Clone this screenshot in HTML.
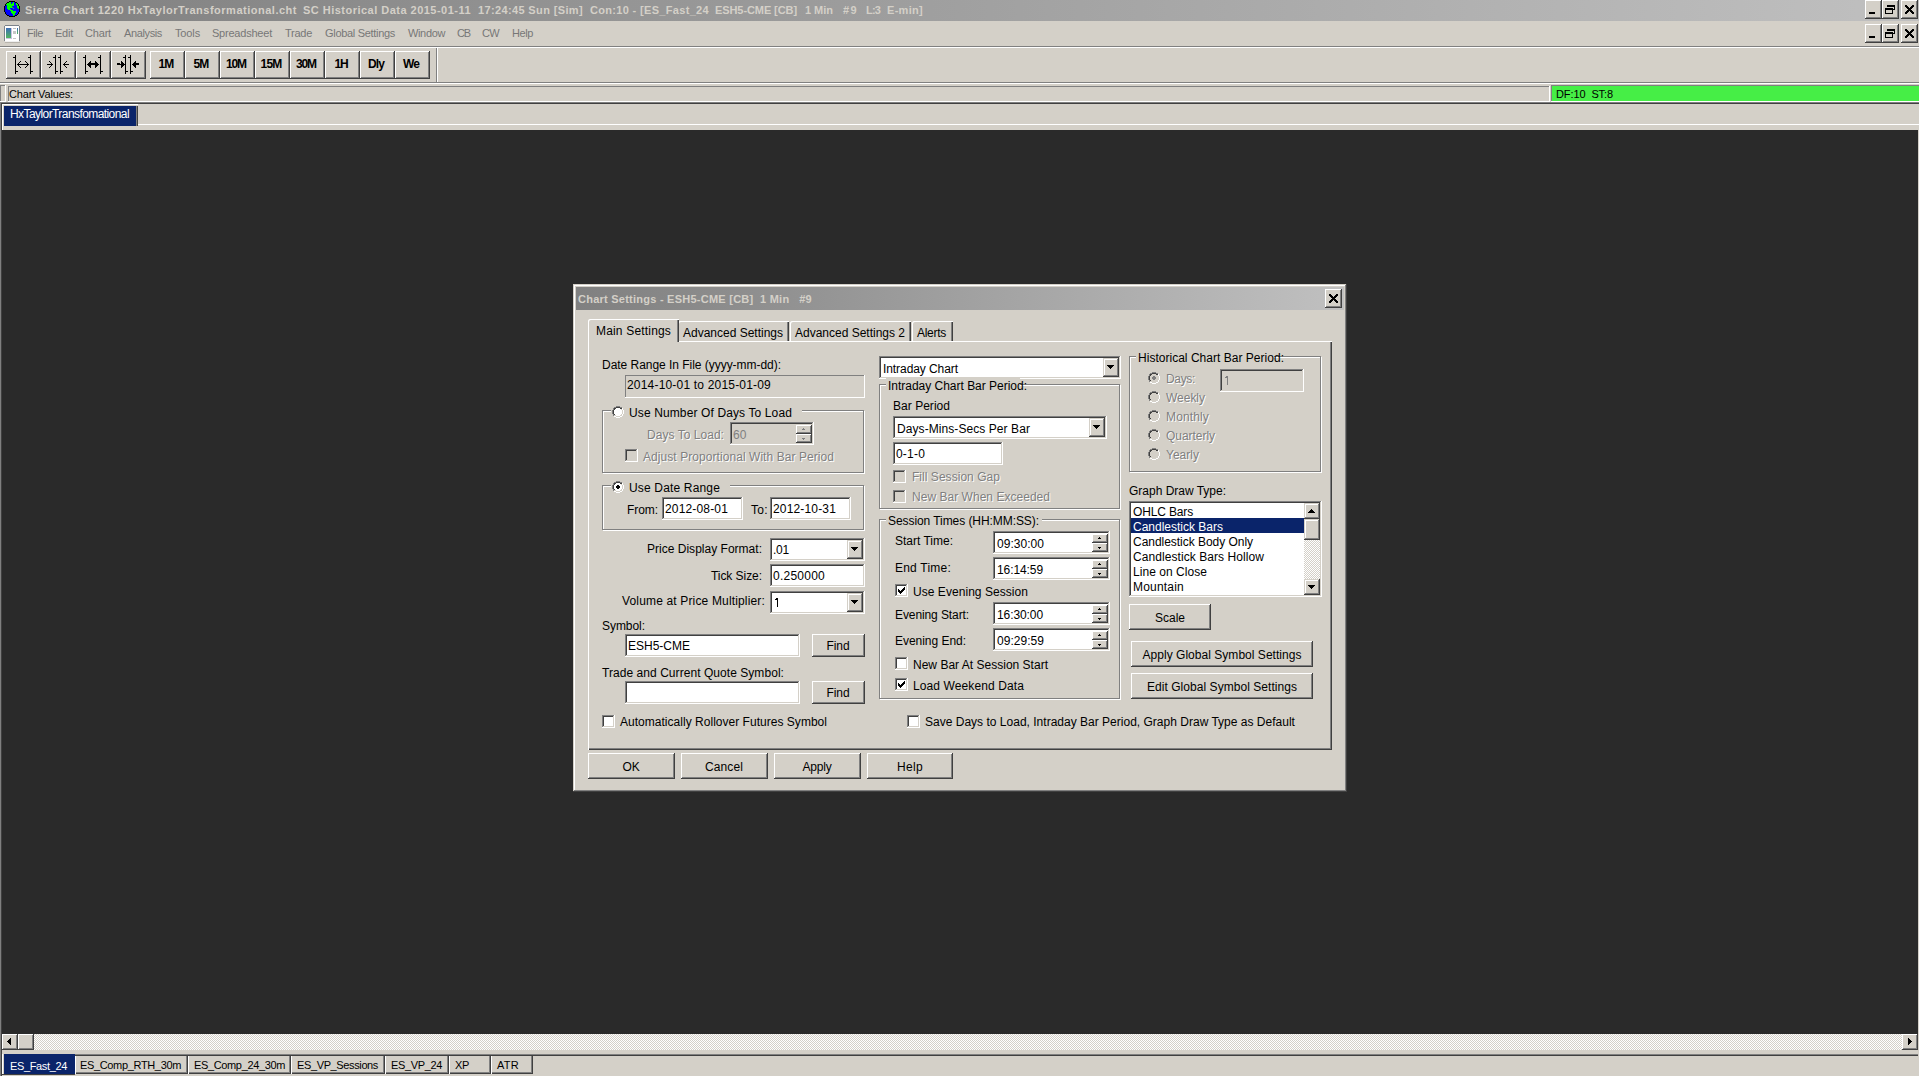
<!DOCTYPE html><html><head><meta charset="utf-8"><style>
html,body{margin:0;padding:0;}
body{width:1919px;height:1076px;overflow:hidden;position:relative;background:#d4d0c8;font-family:"Liberation Sans",sans-serif;}
body>div,body>svg,body>span{position:absolute;}
.t{position:absolute;white-space:pre;line-height:20px;font-family:"Liberation Sans",sans-serif;}
</style></head><body><div style="left:0px;top:0px;width:1919px;height:21px;background:linear-gradient(to right,#808080,#c0c0c0)"></div><svg style="left:4px;top:1px" width="16" height="16" shape-rendering="crispEdges"><rect x="5" y="0" width="1" height="1" fill="#000"/><rect x="6" y="0" width="1" height="1" fill="#000"/><rect x="7" y="0" width="1" height="1" fill="#000"/><rect x="8" y="0" width="1" height="1" fill="#000"/><rect x="9" y="0" width="1" height="1" fill="#000"/><rect x="10" y="0" width="1" height="1" fill="#000"/><rect x="3" y="1" width="1" height="1" fill="#000"/><rect x="4" y="1" width="1" height="1" fill="#000"/><rect x="5" y="1" width="1" height="1" fill="#00ff00"/><rect x="6" y="1" width="1" height="1" fill="#00ff00"/><rect x="7" y="1" width="1" height="1" fill="#0000ff"/><rect x="8" y="1" width="1" height="1" fill="#0000ff"/><rect x="9" y="1" width="1" height="1" fill="#00ff00"/><rect x="10" y="1" width="1" height="1" fill="#0000ff"/><rect x="11" y="1" width="1" height="1" fill="#000"/><rect x="12" y="1" width="1" height="1" fill="#000"/><rect x="2" y="2" width="1" height="1" fill="#000"/><rect x="3" y="2" width="1" height="1" fill="#00ff00"/><rect x="4" y="2" width="1" height="1" fill="#00ff00"/><rect x="5" y="2" width="1" height="1" fill="#00ff00"/><rect x="6" y="2" width="1" height="1" fill="#00ff00"/><rect x="7" y="2" width="1" height="1" fill="#0000ff"/><rect x="8" y="2" width="1" height="1" fill="#00ff00"/><rect x="9" y="2" width="1" height="1" fill="#00ff00"/><rect x="10" y="2" width="1" height="1" fill="#0000ff"/><rect x="11" y="2" width="1" height="1" fill="#0000ff"/><rect x="12" y="2" width="1" height="1" fill="#00ff00"/><rect x="13" y="2" width="1" height="1" fill="#000"/><rect x="1" y="3" width="1" height="1" fill="#000"/><rect x="2" y="3" width="1" height="1" fill="#00ff00"/><rect x="3" y="3" width="1" height="1" fill="#00ff00"/><rect x="4" y="3" width="1" height="1" fill="#00ff00"/><rect x="5" y="3" width="1" height="1" fill="#00ff00"/><rect x="6" y="3" width="1" height="1" fill="#00ff00"/><rect x="7" y="3" width="1" height="1" fill="#00ff00"/><rect x="8" y="3" width="1" height="1" fill="#00ff00"/><rect x="9" y="3" width="1" height="1" fill="#00ff00"/><rect x="10" y="3" width="1" height="1" fill="#0000ff"/><rect x="11" y="3" width="1" height="1" fill="#0000ff"/><rect x="12" y="3" width="1" height="1" fill="#00ff00"/><rect x="13" y="3" width="1" height="1" fill="#00ff00"/><rect x="14" y="3" width="1" height="1" fill="#000"/><rect x="1" y="4" width="1" height="1" fill="#000"/><rect x="2" y="4" width="1" height="1" fill="#0000ff"/><rect x="3" y="4" width="1" height="1" fill="#00ff00"/><rect x="4" y="4" width="1" height="1" fill="#00ff00"/><rect x="5" y="4" width="1" height="1" fill="#00ff00"/><rect x="6" y="4" width="1" height="1" fill="#00ff00"/><rect x="7" y="4" width="1" height="1" fill="#00ff00"/><rect x="8" y="4" width="1" height="1" fill="#00ff00"/><rect x="9" y="4" width="1" height="1" fill="#00ff00"/><rect x="10" y="4" width="1" height="1" fill="#0000ff"/><rect x="11" y="4" width="1" height="1" fill="#0000ff"/><rect x="12" y="4" width="1" height="1" fill="#0000ff"/><rect x="13" y="4" width="1" height="1" fill="#00ff00"/><rect x="14" y="4" width="1" height="1" fill="#000"/><rect x="0" y="5" width="1" height="1" fill="#000"/><rect x="1" y="5" width="1" height="1" fill="#0000ff"/><rect x="2" y="5" width="1" height="1" fill="#0000ff"/><rect x="3" y="5" width="1" height="1" fill="#00ff00"/><rect x="4" y="5" width="1" height="1" fill="#00ff00"/><rect x="5" y="5" width="1" height="1" fill="#00ff00"/><rect x="6" y="5" width="1" height="1" fill="#00ff00"/><rect x="7" y="5" width="1" height="1" fill="#00ff00"/><rect x="8" y="5" width="1" height="1" fill="#0000ff"/><rect x="9" y="5" width="1" height="1" fill="#0000ff"/><rect x="10" y="5" width="1" height="1" fill="#0000ff"/><rect x="11" y="5" width="1" height="1" fill="#0000ff"/><rect x="12" y="5" width="1" height="1" fill="#0000ff"/><rect x="13" y="5" width="1" height="1" fill="#00ff00"/><rect x="14" y="5" width="1" height="1" fill="#00ff00"/><rect x="15" y="5" width="1" height="1" fill="#000"/><rect x="0" y="6" width="1" height="1" fill="#000"/><rect x="1" y="6" width="1" height="1" fill="#0000ff"/><rect x="2" y="6" width="1" height="1" fill="#0000ff"/><rect x="3" y="6" width="1" height="1" fill="#00ff00"/><rect x="4" y="6" width="1" height="1" fill="#00ff00"/><rect x="5" y="6" width="1" height="1" fill="#00ff00"/><rect x="6" y="6" width="1" height="1" fill="#00ff00"/><rect x="7" y="6" width="1" height="1" fill="#00ff00"/><rect x="8" y="6" width="1" height="1" fill="#00ff00"/><rect x="9" y="6" width="1" height="1" fill="#0000ff"/><rect x="10" y="6" width="1" height="1" fill="#0000ff"/><rect x="11" y="6" width="1" height="1" fill="#0000ff"/><rect x="12" y="6" width="1" height="1" fill="#0000ff"/><rect x="13" y="6" width="1" height="1" fill="#00ff00"/><rect x="14" y="6" width="1" height="1" fill="#00ff00"/><rect x="15" y="6" width="1" height="1" fill="#000"/><rect x="0" y="7" width="1" height="1" fill="#000"/><rect x="1" y="7" width="1" height="1" fill="#0000ff"/><rect x="2" y="7" width="1" height="1" fill="#0000ff"/><rect x="3" y="7" width="1" height="1" fill="#00ff00"/><rect x="4" y="7" width="1" height="1" fill="#00ff00"/><rect x="5" y="7" width="1" height="1" fill="#00ff00"/><rect x="6" y="7" width="1" height="1" fill="#0000ff"/><rect x="7" y="7" width="1" height="1" fill="#0000ff"/><rect x="8" y="7" width="1" height="1" fill="#0000ff"/><rect x="9" y="7" width="1" height="1" fill="#00ff00"/><rect x="10" y="7" width="1" height="1" fill="#0000ff"/><rect x="11" y="7" width="1" height="1" fill="#0000ff"/><rect x="12" y="7" width="1" height="1" fill="#0000ff"/><rect x="13" y="7" width="1" height="1" fill="#0000ff"/><rect x="14" y="7" width="1" height="1" fill="#00ff00"/><rect x="15" y="7" width="1" height="1" fill="#000"/><rect x="0" y="8" width="1" height="1" fill="#000"/><rect x="1" y="8" width="1" height="1" fill="#0000ff"/><rect x="2" y="8" width="1" height="1" fill="#0000ff"/><rect x="3" y="8" width="1" height="1" fill="#0000ff"/><rect x="4" y="8" width="1" height="1" fill="#00ff00"/><rect x="5" y="8" width="1" height="1" fill="#00ff00"/><rect x="6" y="8" width="1" height="1" fill="#00ff00"/><rect x="7" y="8" width="1" height="1" fill="#0000ff"/><rect x="8" y="8" width="1" height="1" fill="#0000ff"/><rect x="9" y="8" width="1" height="1" fill="#0000ff"/><rect x="10" y="8" width="1" height="1" fill="#0000ff"/><rect x="11" y="8" width="1" height="1" fill="#0000ff"/><rect x="12" y="8" width="1" height="1" fill="#0000ff"/><rect x="13" y="8" width="1" height="1" fill="#0000ff"/><rect x="14" y="8" width="1" height="1" fill="#0000ff"/><rect x="15" y="8" width="1" height="1" fill="#000"/><rect x="0" y="9" width="1" height="1" fill="#000"/><rect x="1" y="9" width="1" height="1" fill="#0000ff"/><rect x="2" y="9" width="1" height="1" fill="#0000ff"/><rect x="3" y="9" width="1" height="1" fill="#0000ff"/><rect x="4" y="9" width="1" height="1" fill="#0000ff"/><rect x="5" y="9" width="1" height="1" fill="#0000ff"/><rect x="6" y="9" width="1" height="1" fill="#00ff00"/><rect x="7" y="9" width="1" height="1" fill="#00ff00"/><rect x="8" y="9" width="1" height="1" fill="#00ff00"/><rect x="9" y="9" width="1" height="1" fill="#0000ff"/><rect x="10" y="9" width="1" height="1" fill="#0000ff"/><rect x="11" y="9" width="1" height="1" fill="#0000ff"/><rect x="12" y="9" width="1" height="1" fill="#0000ff"/><rect x="13" y="9" width="1" height="1" fill="#0000ff"/><rect x="14" y="9" width="1" height="1" fill="#0000ff"/><rect x="15" y="9" width="1" height="1" fill="#000"/><rect x="0" y="10" width="1" height="1" fill="#000"/><rect x="1" y="10" width="1" height="1" fill="#0000ff"/><rect x="2" y="10" width="1" height="1" fill="#0000ff"/><rect x="3" y="10" width="1" height="1" fill="#0000ff"/><rect x="4" y="10" width="1" height="1" fill="#0000ff"/><rect x="5" y="10" width="1" height="1" fill="#0000ff"/><rect x="6" y="10" width="1" height="1" fill="#0000ff"/><rect x="7" y="10" width="1" height="1" fill="#00ff00"/><rect x="8" y="10" width="1" height="1" fill="#00ff00"/><rect x="9" y="10" width="1" height="1" fill="#00ff00"/><rect x="10" y="10" width="1" height="1" fill="#00ff00"/><rect x="11" y="10" width="1" height="1" fill="#00ff00"/><rect x="12" y="10" width="1" height="1" fill="#0000ff"/><rect x="13" y="10" width="1" height="1" fill="#0000ff"/><rect x="14" y="10" width="1" height="1" fill="#0000ff"/><rect x="15" y="10" width="1" height="1" fill="#000"/><rect x="1" y="11" width="1" height="1" fill="#000"/><rect x="2" y="11" width="1" height="1" fill="#0000ff"/><rect x="3" y="11" width="1" height="1" fill="#0000ff"/><rect x="4" y="11" width="1" height="1" fill="#0000ff"/><rect x="5" y="11" width="1" height="1" fill="#0000ff"/><rect x="6" y="11" width="1" height="1" fill="#0000ff"/><rect x="7" y="11" width="1" height="1" fill="#00ff00"/><rect x="8" y="11" width="1" height="1" fill="#00ff00"/><rect x="9" y="11" width="1" height="1" fill="#00ff00"/><rect x="10" y="11" width="1" height="1" fill="#00ff00"/><rect x="11" y="11" width="1" height="1" fill="#00ff00"/><rect x="12" y="11" width="1" height="1" fill="#0000ff"/><rect x="13" y="11" width="1" height="1" fill="#0000ff"/><rect x="14" y="11" width="1" height="1" fill="#000"/><rect x="1" y="12" width="1" height="1" fill="#000"/><rect x="2" y="12" width="1" height="1" fill="#0000ff"/><rect x="3" y="12" width="1" height="1" fill="#0000ff"/><rect x="4" y="12" width="1" height="1" fill="#0000ff"/><rect x="5" y="12" width="1" height="1" fill="#0000ff"/><rect x="6" y="12" width="1" height="1" fill="#0000ff"/><rect x="7" y="12" width="1" height="1" fill="#0000ff"/><rect x="8" y="12" width="1" height="1" fill="#00ff00"/><rect x="9" y="12" width="1" height="1" fill="#00ff00"/><rect x="10" y="12" width="1" height="1" fill="#00ff00"/><rect x="11" y="12" width="1" height="1" fill="#0000ff"/><rect x="12" y="12" width="1" height="1" fill="#0000ff"/><rect x="13" y="12" width="1" height="1" fill="#0000ff"/><rect x="14" y="12" width="1" height="1" fill="#000"/><rect x="2" y="13" width="1" height="1" fill="#000"/><rect x="3" y="13" width="1" height="1" fill="#0000ff"/><rect x="4" y="13" width="1" height="1" fill="#0000ff"/><rect x="5" y="13" width="1" height="1" fill="#0000ff"/><rect x="6" y="13" width="1" height="1" fill="#0000ff"/><rect x="7" y="13" width="1" height="1" fill="#0000ff"/><rect x="8" y="13" width="1" height="1" fill="#0000ff"/><rect x="9" y="13" width="1" height="1" fill="#00ff00"/><rect x="10" y="13" width="1" height="1" fill="#00ff00"/><rect x="11" y="13" width="1" height="1" fill="#0000ff"/><rect x="12" y="13" width="1" height="1" fill="#0000ff"/><rect x="13" y="13" width="1" height="1" fill="#000"/><rect x="3" y="14" width="1" height="1" fill="#000"/><rect x="4" y="14" width="1" height="1" fill="#000"/><rect x="5" y="14" width="1" height="1" fill="#0000ff"/><rect x="6" y="14" width="1" height="1" fill="#0000ff"/><rect x="7" y="14" width="1" height="1" fill="#0000ff"/><rect x="8" y="14" width="1" height="1" fill="#0000ff"/><rect x="9" y="14" width="1" height="1" fill="#00ff00"/><rect x="10" y="14" width="1" height="1" fill="#0000ff"/><rect x="11" y="14" width="1" height="1" fill="#000"/><rect x="12" y="14" width="1" height="1" fill="#000"/><rect x="5" y="15" width="1" height="1" fill="#000"/><rect x="6" y="15" width="1" height="1" fill="#000"/><rect x="7" y="15" width="1" height="1" fill="#000"/><rect x="8" y="15" width="1" height="1" fill="#000"/><rect x="9" y="15" width="1" height="1" fill="#000"/><rect x="10" y="15" width="1" height="1" fill="#000"/></svg><span class="t" style="top:0px;font-size:11px;color:#d4d0c8;font-weight:bold;left:25px;letter-spacing:0.508px;">Sierra Chart 1220 HxTaylorTransformational.cht</span><span class="t" style="top:0px;font-size:11px;color:#d4d0c8;font-weight:bold;left:303px;letter-spacing:0.480px;">SC Historical Data 2015-01-11</span><span class="t" style="top:0px;font-size:11px;color:#d4d0c8;font-weight:bold;left:478px;letter-spacing:0.365px;">17:24:45 Sun [Sim]</span><span class="t" style="top:0px;font-size:11px;color:#d4d0c8;font-weight:bold;left:590px;letter-spacing:0.326px;">Con:10 - [ES_Fast_24</span><span class="t" style="top:0px;font-size:11px;color:#d4d0c8;font-weight:bold;left:715px;letter-spacing:-0.087px;">ESH5-CME [CB]</span><span class="t" style="top:0px;font-size:11px;color:#d4d0c8;font-weight:bold;left:805px;letter-spacing:-0.025px;">1 Min</span><span class="t" style="top:0px;font-size:11px;color:#d4d0c8;font-weight:bold;left:843px;letter-spacing:1.375px;">#9</span><span class="t" style="top:0px;font-size:11px;color:#d4d0c8;font-weight:bold;left:866px;letter-spacing:-0.833px;">L:3</span><span class="t" style="top:0px;font-size:11px;color:#d4d0c8;font-weight:bold;left:887px;letter-spacing:0.294px;">E-min]</span><div style="left:1865px;top:0px;width:17px;height:19px;background:#d4d0c8;box-shadow:inset -1px -1px #404040,inset 1px 1px #ffffff,inset -2px -2px #808080,inset 2px 2px #d4d0c8;"></div><svg style="left:1865px;top:0px" width="17" height="19" shape-rendering="crispEdges" fill="#000"><rect x="4" y="12" width="6" height="2"/></svg><div style="left:1882px;top:0px;width:17px;height:19px;background:#d4d0c8;box-shadow:inset -1px -1px #404040,inset 1px 1px #ffffff,inset -2px -2px #808080,inset 2px 2px #d4d0c8;"></div><svg style="left:1882px;top:0px" width="17" height="19" shape-rendering="crispEdges" fill="#000"><rect x="3" y="10" width="1" height="4"/><rect x="3" y="8" width="8" height="2"/><rect x="3" y="13" width="8" height="1"/><rect x="10" y="10" width="1" height="4"/><rect x="12" y="7" width="1" height="3"/><rect x="5" y="5" width="8" height="2"/><rect x="11" y="9" width="1" height="1"/></svg><div style="left:1901px;top:0px;width:17px;height:19px;background:#d4d0c8;box-shadow:inset -1px -1px #404040,inset 1px 1px #ffffff,inset -2px -2px #808080,inset 2px 2px #d4d0c8;"></div><svg style="left:1901px;top:0px" width="17" height="19" shape-rendering="crispEdges" fill="#000"><rect x="7" y="11" width="1" height="1"/><rect x="6" y="12" width="1" height="1"/><rect x="11" y="7" width="1" height="1"/><rect x="9" y="10" width="1" height="1"/><rect x="10" y="6" width="1" height="1"/><rect x="11" y="13" width="1" height="1"/><rect x="5" y="6" width="1" height="1"/><rect x="5" y="12" width="1" height="1"/><rect x="7" y="7" width="1" height="1"/><rect x="6" y="8" width="1" height="1"/><rect x="5" y="13" width="1" height="1"/><rect x="4" y="5" width="1" height="1"/><rect x="12" y="6" width="1" height="1"/><rect x="12" y="12" width="1" height="1"/><rect x="9" y="11" width="1" height="1"/><rect x="6" y="6" width="1" height="1"/><rect x="4" y="6" width="1" height="1"/><rect x="9" y="8" width="1" height="1"/><rect x="11" y="11" width="1" height="1"/><rect x="11" y="12" width="1" height="1"/><rect x="9" y="9" width="1" height="1"/><rect x="8" y="10" width="1" height="1"/><rect x="10" y="11" width="1" height="1"/><rect x="11" y="6" width="1" height="1"/><rect x="5" y="5" width="1" height="1"/><rect x="5" y="11" width="1" height="1"/><rect x="10" y="12" width="1" height="1"/><rect x="10" y="10" width="1" height="1"/><rect x="7" y="10" width="1" height="1"/><rect x="12" y="5" width="1" height="1"/><rect x="10" y="7" width="1" height="1"/><rect x="4" y="13" width="1" height="1"/><rect x="5" y="7" width="1" height="1"/><rect x="8" y="9" width="1" height="1"/><rect x="6" y="11" width="1" height="1"/><rect x="10" y="8" width="1" height="1"/><rect x="4" y="12" width="1" height="1"/><rect x="12" y="13" width="1" height="1"/><rect x="9" y="7" width="1" height="1"/><rect x="8" y="8" width="1" height="1"/><rect x="6" y="10" width="1" height="1"/><rect x="11" y="5" width="1" height="1"/><rect x="7" y="8" width="1" height="1"/><rect x="6" y="7" width="1" height="1"/><rect x="7" y="9" width="1" height="1"/></svg><div style="left:1865px;top:24px;width:17px;height:19px;background:#d4d0c8;box-shadow:inset -1px -1px #404040,inset 1px 1px #ffffff,inset -2px -2px #808080,inset 2px 2px #d4d0c8;"></div><svg style="left:1865px;top:24px" width="17" height="19" shape-rendering="crispEdges" fill="#000"><rect x="4" y="12" width="6" height="2"/></svg><div style="left:1882px;top:24px;width:17px;height:19px;background:#d4d0c8;box-shadow:inset -1px -1px #404040,inset 1px 1px #ffffff,inset -2px -2px #808080,inset 2px 2px #d4d0c8;"></div><svg style="left:1882px;top:24px" width="17" height="19" shape-rendering="crispEdges" fill="#000"><rect x="3" y="10" width="1" height="4"/><rect x="3" y="8" width="8" height="2"/><rect x="3" y="13" width="8" height="1"/><rect x="10" y="10" width="1" height="4"/><rect x="12" y="7" width="1" height="3"/><rect x="5" y="5" width="8" height="2"/><rect x="11" y="9" width="1" height="1"/></svg><div style="left:1901px;top:24px;width:17px;height:19px;background:#d4d0c8;box-shadow:inset -1px -1px #404040,inset 1px 1px #ffffff,inset -2px -2px #808080,inset 2px 2px #d4d0c8;"></div><svg style="left:1901px;top:24px" width="17" height="19" shape-rendering="crispEdges" fill="#000"><rect x="7" y="11" width="1" height="1"/><rect x="6" y="12" width="1" height="1"/><rect x="11" y="7" width="1" height="1"/><rect x="9" y="10" width="1" height="1"/><rect x="10" y="6" width="1" height="1"/><rect x="11" y="13" width="1" height="1"/><rect x="5" y="6" width="1" height="1"/><rect x="5" y="12" width="1" height="1"/><rect x="7" y="7" width="1" height="1"/><rect x="6" y="8" width="1" height="1"/><rect x="5" y="13" width="1" height="1"/><rect x="4" y="5" width="1" height="1"/><rect x="12" y="6" width="1" height="1"/><rect x="12" y="12" width="1" height="1"/><rect x="9" y="11" width="1" height="1"/><rect x="6" y="6" width="1" height="1"/><rect x="4" y="6" width="1" height="1"/><rect x="9" y="8" width="1" height="1"/><rect x="11" y="11" width="1" height="1"/><rect x="11" y="12" width="1" height="1"/><rect x="9" y="9" width="1" height="1"/><rect x="8" y="10" width="1" height="1"/><rect x="10" y="11" width="1" height="1"/><rect x="11" y="6" width="1" height="1"/><rect x="5" y="5" width="1" height="1"/><rect x="5" y="11" width="1" height="1"/><rect x="10" y="12" width="1" height="1"/><rect x="10" y="10" width="1" height="1"/><rect x="7" y="10" width="1" height="1"/><rect x="12" y="5" width="1" height="1"/><rect x="10" y="7" width="1" height="1"/><rect x="4" y="13" width="1" height="1"/><rect x="5" y="7" width="1" height="1"/><rect x="8" y="9" width="1" height="1"/><rect x="6" y="11" width="1" height="1"/><rect x="10" y="8" width="1" height="1"/><rect x="4" y="12" width="1" height="1"/><rect x="12" y="13" width="1" height="1"/><rect x="9" y="7" width="1" height="1"/><rect x="8" y="8" width="1" height="1"/><rect x="6" y="10" width="1" height="1"/><rect x="11" y="5" width="1" height="1"/><rect x="7" y="8" width="1" height="1"/><rect x="6" y="7" width="1" height="1"/><rect x="7" y="9" width="1" height="1"/></svg><svg style="left:4px;top:25px" width="16" height="18" shape-rendering="crispEdges"><defs><linearGradient id="g1" x1="0" y1="0" x2="0" y2="1"><stop offset="0" stop-color="#3d6db8"/><stop offset="1" stop-color="#52b560"/></linearGradient></defs><rect x="1" y="0" width="14" height="1" fill="#7d828a"/><rect x="1" y="16" width="14" height="1" fill="#eeeeee"/><rect x="0" y="1" width="1" height="15" fill="#7d828a"/><rect x="15" y="1" width="1" height="15" fill="#7d828a"/><rect x="1" y="1" width="14" height="15" fill="#fff"/><rect x="2" y="3" width="6" height="11" fill="#c9c2e0"/><rect x="2" y="3" width="5" height="10" fill="url(#g1)"/><rect x="9" y="3" width="3" height="1" fill="#bdbdbd"/><rect x="9" y="6" width="3" height="3" fill="#c6c6c6"/><rect x="9" y="13" width="3" height="1" fill="#c6c6c6"/><rect x="13" y="3" width="1" height="6" fill="url(#g1)"/><rect x="1" y="17" width="15" height="1" fill="#b8b4ac"/></svg><span class="t" style="top:23px;font-size:11px;color:#777777;left:27px;letter-spacing:-0.434px;">File</span><span class="t" style="top:23px;font-size:11px;color:#777777;left:55px;letter-spacing:-0.242px;">Edit</span><span class="t" style="top:23px;font-size:11px;color:#777777;left:85px;letter-spacing:-0.181px;">Chart</span><span class="t" style="top:23px;font-size:11px;color:#777777;left:124px;letter-spacing:-0.371px;">Analysis</span><span class="t" style="top:23px;font-size:11px;color:#777777;left:175px;letter-spacing:-0.138px;">Tools</span><span class="t" style="top:23px;font-size:11px;color:#777777;left:212px;letter-spacing:-0.217px;">Spreadsheet</span><span class="t" style="top:23px;font-size:11px;color:#777777;left:285px;letter-spacing:-0.266px;">Trade</span><span class="t" style="top:23px;font-size:11px;color:#777777;left:325px;letter-spacing:-0.307px;">Global Settings</span><span class="t" style="top:23px;font-size:11px;color:#777777;left:408px;letter-spacing:-0.354px;">Window</span><span class="t" style="top:23px;font-size:11px;color:#777777;left:457px;letter-spacing:-1.141px;">CB</span><span class="t" style="top:23px;font-size:11px;color:#777777;left:482px;letter-spacing:-0.664px;">CW</span><span class="t" style="top:23px;font-size:11px;color:#777777;left:512px;letter-spacing:-0.406px;">Help</span><div style="left:0px;top:46px;width:1919px;height:1px;background:#808080"></div><div style="left:0px;top:47px;width:1919px;height:1px;background:#ffffff"></div><div style="left:6px;top:51px;width:35px;height:28px;background:#d4d0c8;box-shadow:inset -1px -1px #404040,inset 1px 1px #ffffff,inset -2px -2px #808080,inset 2px 2px #d4d0c8;"></div><div style="left:41px;top:51px;width:35px;height:28px;background:#d4d0c8;box-shadow:inset -1px -1px #404040,inset 1px 1px #ffffff,inset -2px -2px #808080,inset 2px 2px #d4d0c8;"></div><div style="left:76px;top:51px;width:35px;height:28px;background:#d4d0c8;box-shadow:inset -1px -1px #404040,inset 1px 1px #ffffff,inset -2px -2px #808080,inset 2px 2px #d4d0c8;"></div><div style="left:111px;top:51px;width:35px;height:28px;background:#d4d0c8;box-shadow:inset -1px -1px #404040,inset 1px 1px #ffffff,inset -2px -2px #808080,inset 2px 2px #d4d0c8;"></div><svg style="left:6px;top:51px" width="35" height="28" shape-rendering="crispEdges" fill="#000"><rect x="9" y="4" width="1" height="19"/><rect x="7" y="6" width="2" height="1"/><rect x="10" y="20" width="2" height="1"/><rect x="24" y="4" width="1" height="19"/><rect x="22" y="6" width="2" height="1"/><rect x="25" y="20" width="2" height="1"/><rect x="11" y="13" width="12" height="1"/><rect x="12" y="12" width="1" height="1"/><rect x="13" y="11" width="1" height="1"/><rect x="14" y="10" width="1" height="1"/><rect x="12" y="14" width="1" height="1"/><rect x="13" y="15" width="1" height="1"/><rect x="14" y="16" width="1" height="1"/><rect x="21" y="12" width="1" height="1"/><rect x="20" y="11" width="1" height="1"/><rect x="19" y="10" width="1" height="1"/><rect x="21" y="14" width="1" height="1"/><rect x="20" y="15" width="1" height="1"/><rect x="19" y="16" width="1" height="1"/></svg><svg style="left:41px;top:51px" width="35" height="28" shape-rendering="crispEdges" fill="#000"><rect x="14" y="4" width="1" height="19"/><rect x="12" y="6" width="2" height="1"/><rect x="15" y="20" width="2" height="1"/><rect x="19" y="4" width="1" height="19"/><rect x="17" y="6" width="2" height="1"/><rect x="20" y="20" width="2" height="1"/><rect x="6" y="13" width="6" height="1"/><rect x="11" y="13" width="1" height="1"/><rect x="10" y="12" width="1" height="1"/><rect x="9" y="11" width="1" height="1"/><rect x="8" y="10" width="1" height="1"/><rect x="10" y="14" width="1" height="1"/><rect x="9" y="15" width="1" height="1"/><rect x="8" y="16" width="1" height="1"/><rect x="22" y="13" width="6" height="1"/><rect x="22" y="13" width="1" height="1"/><rect x="23" y="12" width="1" height="1"/><rect x="24" y="11" width="1" height="1"/><rect x="25" y="10" width="1" height="1"/><rect x="23" y="14" width="1" height="1"/><rect x="24" y="15" width="1" height="1"/><rect x="25" y="16" width="1" height="1"/></svg><svg style="left:76px;top:51px" width="35" height="28" shape-rendering="crispEdges" fill="#000"><rect x="9" y="4" width="1" height="19"/><rect x="7" y="6" width="2" height="1"/><rect x="10" y="20" width="2" height="1"/><rect x="24" y="4" width="1" height="19"/><rect x="22" y="6" width="2" height="1"/><rect x="25" y="20" width="2" height="1"/><rect x="11" y="13" width="12" height="1"/><rect x="15" y="12" width="4" height="2"/><rect x="11" y="13" width="1" height="1"/><rect x="12" y="12" width="1" height="3"/><rect x="13" y="11" width="1" height="5"/><rect x="14" y="10" width="1" height="7"/><rect x="22" y="13" width="1" height="1"/><rect x="21" y="12" width="1" height="3"/><rect x="20" y="11" width="1" height="5"/><rect x="19" y="10" width="1" height="7"/></svg><svg style="left:111px;top:51px" width="35" height="28" shape-rendering="crispEdges" fill="#000"><rect x="14" y="4" width="1" height="19"/><rect x="12" y="6" width="2" height="1"/><rect x="15" y="20" width="2" height="1"/><rect x="19" y="4" width="1" height="19"/><rect x="17" y="6" width="2" height="1"/><rect x="20" y="20" width="2" height="1"/><rect x="6" y="13" width="4" height="1"/><rect x="6" y="12" width="3" height="2"/><rect x="10" y="10" width="1" height="7"/><rect x="11" y="11" width="1" height="5"/><rect x="12" y="12" width="1" height="3"/><rect x="13" y="13" width="1" height="1"/><rect x="21" y="13" width="1" height="1"/><rect x="22" y="12" width="1" height="3"/><rect x="23" y="11" width="1" height="5"/><rect x="24" y="10" width="1" height="7"/><rect x="25" y="12" width="3" height="2"/></svg><div style="left:150px;top:51px;width:35px;height:28px;background:#d4d0c8;box-shadow:inset -1px -1px #404040,inset 1px 1px #ffffff,inset -2px -2px #808080,inset 2px 2px #d4d0c8;"></div><span class="t" style="top:54px;left:-34px;width:400px;text-align:center;font-size:12px;color:#000;font-weight:bold;letter-spacing:-0.836px;">1M</span><div style="left:185px;top:51px;width:35px;height:28px;background:#d4d0c8;box-shadow:inset -1px -1px #404040,inset 1px 1px #ffffff,inset -2px -2px #808080,inset 2px 2px #d4d0c8;"></div><span class="t" style="top:54px;left:1px;width:400px;text-align:center;font-size:12px;color:#000;font-weight:bold;letter-spacing:-0.836px;">5M</span><div style="left:220px;top:51px;width:35px;height:28px;background:#d4d0c8;box-shadow:inset -1px -1px #404040,inset 1px 1px #ffffff,inset -2px -2px #808080,inset 2px 2px #d4d0c8;"></div><span class="t" style="top:54px;left:36px;width:400px;text-align:center;font-size:12px;color:#000;font-weight:bold;letter-spacing:-1.115px;">10M</span><div style="left:255px;top:51px;width:35px;height:28px;background:#d4d0c8;box-shadow:inset -1px -1px #404040,inset 1px 1px #ffffff,inset -2px -2px #808080,inset 2px 2px #d4d0c8;"></div><span class="t" style="top:54px;left:71px;width:400px;text-align:center;font-size:12px;color:#000;font-weight:bold;letter-spacing:-0.781px;">15M</span><div style="left:290px;top:51px;width:35px;height:28px;background:#d4d0c8;box-shadow:inset -1px -1px #404040,inset 1px 1px #ffffff,inset -2px -2px #808080,inset 2px 2px #d4d0c8;"></div><span class="t" style="top:54px;left:106px;width:400px;text-align:center;font-size:12px;color:#000;font-weight:bold;letter-spacing:-1.115px;">30M</span><div style="left:325px;top:51px;width:35px;height:28px;background:#d4d0c8;box-shadow:inset -1px -1px #404040,inset 1px 1px #ffffff,inset -2px -2px #808080,inset 2px 2px #d4d0c8;"></div><span class="t" style="top:54px;left:141px;width:400px;text-align:center;font-size:12px;color:#000;font-weight:bold;letter-spacing:-1.172px;">1H</span><div style="left:360px;top:51px;width:35px;height:28px;background:#d4d0c8;box-shadow:inset -1px -1px #404040,inset 1px 1px #ffffff,inset -2px -2px #808080,inset 2px 2px #d4d0c8;"></div><span class="t" style="top:54px;left:176px;width:400px;text-align:center;font-size:12px;color:#000;font-weight:bold;letter-spacing:-0.896px;">Dly</span><div style="left:395px;top:51px;width:35px;height:28px;background:#d4d0c8;box-shadow:inset -1px -1px #404040,inset 1px 1px #ffffff,inset -2px -2px #808080,inset 2px 2px #d4d0c8;"></div><span class="t" style="top:54px;left:211px;width:400px;text-align:center;font-size:12px;color:#000;font-weight:bold;letter-spacing:-0.898px;">We</span><div style="left:436px;top:48px;width:1px;height:34px;background:#808080"></div><div style="left:437px;top:48px;width:1px;height:34px;background:#ffffff"></div><div style="left:0px;top:82px;width:1919px;height:1px;background:#808080"></div><div style="left:0px;top:83px;width:1919px;height:1px;background:#ffffff"></div><div style="left:0px;top:85px;width:6px;height:17px;background:#d4d0c8;box-shadow:inset -1px -1px #ffffff,inset 1px 1px #808080"></div><div style="left:8px;top:86px;width:1542px;height:16px;background:#d4d0c8;box-shadow:inset -1px -1px #ffffff,inset 1px 1px #808080"></div><span class="t" style="top:84px;font-size:11px;color:#000;left:9px;letter-spacing:-0.141px;">Chart Values:</span><div style="left:1551px;top:85px;width:372px;height:17px;background:#46ee46;box-shadow:inset -1px -1px #ffffff,inset 1px 1px #808080"></div><span class="t" style="top:84px;font-size:11px;color:#000;left:1556px;letter-spacing:-0.098px;">DF:10  ST:8</span><div style="left:0px;top:102px;width:1919px;height:1px;background:#808080"></div><div style="left:1px;top:103px;width:1919px;height:1px;background:#404040"></div><div style="left:2px;top:104px;width:136px;height:1px;background:#ffffff"></div><div style="left:2px;top:104px;width:1px;height:26px;background:#ffffff"></div><div style="left:4px;top:106px;width:134px;height:20px;background:#0a246a;box-shadow:inset -1px 0 #404040,inset -2px 0 #808080"></div><div style="left:0px;top:102px;width:1px;height:974px;background:#808080"></div><div style="left:1px;top:103px;width:1px;height:973px;background:#404040"></div><span class="t" style="top:104px;font-size:12px;color:#fff;left:10px;letter-spacing:-0.577px;">HxTaylorTransfomational</span><div style="left:138px;top:124px;width:1781px;height:1px;background:#ffffff"></div><div style="left:0px;top:130px;width:1919px;height:904px;background:#2a2a2a;box-shadow:inset 1px 0 #808080,inset 2px 0 #404040,inset -1px 0 #d4d0c8"></div><div style="left:2px;top:1034px;width:1916px;height:16px;background:repeating-conic-gradient(#fff 0 25%,#d4d0c8 0 50%) 0 0/2px 2px"></div><div style="left:2px;top:1034px;width:16px;height:16px;background:#d4d0c8;box-shadow:inset -1px -1px #404040,inset 1px 1px #ffffff,inset -2px -2px #808080,inset 2px 2px #d4d0c8;"></div><svg style="left:7px;top:1038px" width="4" height="7" shape-rendering="crispEdges"><path d="M3 0h1v7h-1v-1h-1v-1h-1v-1h-1v-1h1v-1h1v-1h1z" fill="#000"/></svg><div style="left:18px;top:1034px;width:16px;height:16px;background:#d4d0c8;box-shadow:inset -1px -1px #404040,inset 1px 1px #ffffff,inset -2px -2px #808080,inset 2px 2px #d4d0c8;"></div><div style="left:1902px;top:1034px;width:16px;height:16px;background:#d4d0c8;box-shadow:inset -1px -1px #404040,inset 1px 1px #ffffff,inset -2px -2px #808080,inset 2px 2px #d4d0c8;"></div><svg style="left:1908px;top:1038px" width="4" height="7" shape-rendering="crispEdges"><path d="M0 0h1v1h1v1h1v1h1v1h-1v1h-1v1h-1v1h-1z" fill="#000"/></svg><div style="left:75px;top:1054px;width:1843px;height:1px;background:#808080"></div><div style="left:75px;top:1055px;width:1843px;height:1px;background:#404040"></div><div style="left:75px;top:1056px;width:113px;height:18px;background:#d4d0c8;box-shadow:inset 1px 0 #ffffff,inset -1px -1px #404040,inset -2px -2px #808080"></div><span class="t" style="top:1055px;font-size:11px;color:#000;left:80px;letter-spacing:-0.346px;">ES_Comp_RTH_30m</span><div style="left:188px;top:1056px;width:103px;height:18px;background:#d4d0c8;box-shadow:inset 1px 0 #ffffff,inset -1px -1px #404040,inset -2px -2px #808080"></div><span class="t" style="top:1055px;font-size:11px;color:#000;left:194px;letter-spacing:-0.358px;">ES_Comp_24_30m</span><div style="left:291px;top:1056px;width:94px;height:18px;background:#d4d0c8;box-shadow:inset 1px 0 #ffffff,inset -1px -1px #404040,inset -2px -2px #808080"></div><span class="t" style="top:1055px;font-size:11px;color:#000;left:297px;letter-spacing:-0.373px;">ES_VP_Sessions</span><div style="left:385px;top:1056px;width:64px;height:18px;background:#d4d0c8;box-shadow:inset 1px 0 #ffffff,inset -1px -1px #404040,inset -2px -2px #808080"></div><span class="t" style="top:1055px;font-size:11px;color:#000;left:391px;letter-spacing:-0.354px;">ES_VP_24</span><div style="left:449px;top:1056px;width:42px;height:18px;background:#d4d0c8;box-shadow:inset 1px 0 #ffffff,inset -1px -1px #404040,inset -2px -2px #808080"></div><span class="t" style="top:1055px;font-size:11px;color:#000;left:455px;letter-spacing:-0.344px;">XP</span><div style="left:491px;top:1056px;width:42px;height:18px;background:#d4d0c8;box-shadow:inset 1px 0 #ffffff,inset -1px -1px #404040,inset -2px -2px #808080"></div><span class="t" style="top:1055px;font-size:11px;color:#000;left:497px;letter-spacing:0.271px;">ATR</span><div style="left:4px;top:1054px;width:71px;height:20px;background:#0a246a"></div><span class="t" style="top:1056px;font-size:11px;color:#fff;left:10px;letter-spacing:-0.355px;">ES_Fast_24</span><div style="left:2px;top:1054px;width:1px;height:20px;background:#ffffff"></div><div style="left:2px;top:1074px;width:73px;height:1px;background:#404040"></div><div style="left:75px;top:1074px;width:1844px;height:2px;background:#d4d0c8"></div><div style="left:1918px;top:130px;width:1px;height:945px;background:#d4d0c8"></div><div style="left:573px;top:284px;width:774px;height:508px;background:#d4d0c8;box-shadow:inset -1px -1px #404040,inset 1px 1px #d4d0c8,inset -2px -2px #808080,inset 2px 2px #ffffff"></div><div style="left:576px;top:287px;width:768px;height:23px;background:linear-gradient(to right,#808080,#c0c0c0)"></div><span class="t" style="top:289px;font-size:11px;color:#d4d0c8;font-weight:bold;left:578px;letter-spacing:0.245px;">Chart Settings - ESH5-CME [CB]  1 Min   #9</span><div style="left:1325px;top:289px;width:17px;height:19px;background:#d4d0c8;box-shadow:inset -1px -1px #404040,inset 1px 1px #ffffff,inset -2px -2px #808080,inset 2px 2px #d4d0c8;"></div><svg style="left:1325px;top:289px" width="17" height="19" shape-rendering="crispEdges" fill="#000"><rect x="7" y="11" width="1" height="1"/><rect x="6" y="12" width="1" height="1"/><rect x="11" y="7" width="1" height="1"/><rect x="9" y="10" width="1" height="1"/><rect x="10" y="6" width="1" height="1"/><rect x="11" y="13" width="1" height="1"/><rect x="5" y="6" width="1" height="1"/><rect x="5" y="12" width="1" height="1"/><rect x="7" y="7" width="1" height="1"/><rect x="6" y="8" width="1" height="1"/><rect x="5" y="13" width="1" height="1"/><rect x="4" y="5" width="1" height="1"/><rect x="12" y="6" width="1" height="1"/><rect x="12" y="12" width="1" height="1"/><rect x="9" y="11" width="1" height="1"/><rect x="6" y="6" width="1" height="1"/><rect x="4" y="6" width="1" height="1"/><rect x="9" y="8" width="1" height="1"/><rect x="11" y="11" width="1" height="1"/><rect x="11" y="12" width="1" height="1"/><rect x="9" y="9" width="1" height="1"/><rect x="8" y="10" width="1" height="1"/><rect x="10" y="11" width="1" height="1"/><rect x="11" y="6" width="1" height="1"/><rect x="5" y="5" width="1" height="1"/><rect x="5" y="11" width="1" height="1"/><rect x="10" y="12" width="1" height="1"/><rect x="10" y="10" width="1" height="1"/><rect x="7" y="10" width="1" height="1"/><rect x="12" y="5" width="1" height="1"/><rect x="10" y="7" width="1" height="1"/><rect x="4" y="13" width="1" height="1"/><rect x="5" y="7" width="1" height="1"/><rect x="8" y="9" width="1" height="1"/><rect x="6" y="11" width="1" height="1"/><rect x="10" y="8" width="1" height="1"/><rect x="4" y="12" width="1" height="1"/><rect x="12" y="13" width="1" height="1"/><rect x="9" y="7" width="1" height="1"/><rect x="8" y="8" width="1" height="1"/><rect x="6" y="10" width="1" height="1"/><rect x="11" y="5" width="1" height="1"/><rect x="7" y="8" width="1" height="1"/><rect x="6" y="7" width="1" height="1"/><rect x="7" y="9" width="1" height="1"/></svg><div style="left:588px;top:341px;width:744px;height:409px;background:#d4d0c8;box-shadow:inset 1px 1px #ffffff,inset -1px -1px #404040,inset -2px -2px #808080"></div><div style="left:678px;top:321px;width:111px;height:20px;background:#d4d0c8;box-shadow:inset 1px 1px #ffffff,inset -1px 0 #404040,inset -2px 0 #808080;border-top-left-radius:2px"></div><span class="t" style="top:323px;font-size:12px;color:#000;left:683px;letter-spacing:-0.005px;">Advanced Settings</span><div style="left:790px;top:321px;width:121px;height:20px;background:#d4d0c8;box-shadow:inset 1px 1px #ffffff,inset -1px 0 #404040,inset -2px 0 #808080;border-top-left-radius:2px"></div><span class="t" style="top:323px;font-size:12px;color:#000;left:795px;letter-spacing:-0.004px;">Advanced Settings 2</span><div style="left:912px;top:321px;width:41px;height:20px;background:#d4d0c8;box-shadow:inset 1px 1px #ffffff,inset -1px 0 #404040,inset -2px 0 #808080;border-top-left-radius:2px"></div><span class="t" style="top:323px;font-size:12px;color:#000;left:917px;letter-spacing:-0.281px;">Alerts</span><div style="left:588px;top:319px;width:91px;height:23px;background:#d4d0c8;box-shadow:inset 1px 1px #ffffff,inset -1px 0 #404040,inset -2px 0 #808080;border-top-left-radius:2px"></div><span class="t" style="top:321px;font-size:12px;color:#000;left:596px;letter-spacing:0.177px;">Main Settings</span><div style="left:588px;top:753px;width:87px;height:26px;background:#d4d0c8;box-shadow:inset -1px -1px #404040,inset 1px 1px #ffffff,inset -2px -2px #808080,inset 2px 2px #d4d0c8;"></div><span class="t" style="top:757px;left:431px;width:400px;text-align:center;font-size:12px;color:#000;letter-spacing:-0.172px;">OK</span><div style="left:681px;top:753px;width:87px;height:26px;background:#d4d0c8;box-shadow:inset -1px -1px #404040,inset 1px 1px #ffffff,inset -2px -2px #808080,inset 2px 2px #d4d0c8;"></div><span class="t" style="top:757px;left:524px;width:400px;text-align:center;font-size:12px;color:#000;letter-spacing:0.107px;">Cancel</span><div style="left:774px;top:753px;width:87px;height:26px;background:#d4d0c8;box-shadow:inset -1px -1px #404040,inset 1px 1px #ffffff,inset -2px -2px #808080,inset 2px 2px #d4d0c8;"></div><span class="t" style="top:757px;left:617px;width:400px;text-align:center;font-size:12px;color:#000;letter-spacing:-0.206px;">Apply</span><div style="left:867px;top:753px;width:86px;height:26px;background:#d4d0c8;box-shadow:inset -1px -1px #404040,inset 1px 1px #ffffff,inset -2px -2px #808080,inset 2px 2px #d4d0c8;"></div><span class="t" style="top:757px;left:710px;width:400px;text-align:center;font-size:12px;color:#000;letter-spacing:0.328px;">Help</span><span class="t" style="top:355px;font-size:12px;color:#000;left:602px;letter-spacing:-0.033px;">Date Range In File (yyyy-mm-dd):</span><div style="left:625px;top:375px;width:240px;height:23px;background:#d4d0c8;box-shadow:inset -1px -1px #ffffff,inset 1px 1px #808080"></div><span class="t" style="top:375px;font-size:12px;color:#000;left:627px;letter-spacing:0.189px;">2014-10-01 to 2015-01-09</span><div style="left:602px;top:410px;width:262px;height:63px;box-sizing:border-box;border:1px solid #808080;box-shadow:inset 1px 1px #ffffff,1px 1px #ffffff"></div><div style="left:611px;top:403px;width:191px;height:14px;background:#d4d0c8"></div><svg style="left:612px;top:406px" width="12" height="12" shape-rendering="crispEdges"><path d="M4 0h4v1h-4zM2 1h2v1h-2zM8 1h2v1h-2zM1 2h1v2h-1zM0 4h1v4h-1zM1 8h1v2h-1z" fill="#808080"/><path d="M10 2h1v2h-1zM11 4h1v4h-1zM10 8h1v2h-1zM2 10h2v1h-2zM8 10h2v1h-2zM4 11h4v1h-4z" fill="#ffffff"/><path d="M4 1h4v1h-4zM2 2h2v1h-2zM8 2h2v1h-2zM2 3h1v1h-1zM1 4h1v4h-1zM2 8h1v1h-1z" fill="#404040"/><path d="M9 3h1v1h-1zM10 4h1v4h-1zM9 8h1v1h-1zM2 9h2v1h-2zM8 9h2v1h-2zM4 10h4v1h-4z" fill="#d4d0c8"/><path d="M4 2h4v1h1v1h1v4h-1v1h-1v1h-4v-1h-1v-1h-1v-4h1v-1h1z" fill="#fff"/></svg><span class="t" style="top:403px;font-size:12px;color:#000;left:629px;letter-spacing:0.121px;">Use Number Of Days To Load</span><span class="t" style="top:425px;font-size:12px;color:#fff;left:647px;margin:1px 0 0 1px;letter-spacing:0.038px;">Days To Load:</span><span class="t" style="top:425px;font-size:12px;color:#808080;left:647px;letter-spacing:0.038px;">Days To Load:</span><div style="left:730px;top:422px;width:84px;height:23px;background:#d4d0c8;box-shadow:inset -1px -1px #ffffff,inset 1px 1px #808080,inset -2px -2px #d4d0c8,inset 2px 2px #404040;"></div><div style="left:796px;top:425px;width:16px;height:9px;background:#d4d0c8;box-shadow:inset -1px -1px #404040,inset 1px 1px #ffffff,inset -2px -2px #808080,inset 2px 2px #d4d0c8;"></div><div style="left:796px;top:434px;width:16px;height:9px;background:#d4d0c8;box-shadow:inset -1px -1px #404040,inset 1px 1px #ffffff,inset -2px -2px #808080,inset 2px 2px #d4d0c8;"></div><svg style="left:802px;top:428px" width="3" height="2" shape-rendering="crispEdges" fill="#808080"><rect x="1" y="0" width="1" height="1"/><rect x="0" y="1" width="3" height="1"/></svg><svg style="left:802px;top:438px" width="3" height="2" shape-rendering="crispEdges" fill="#808080"><rect x="0" y="0" width="3" height="1"/><rect x="1" y="1" width="1" height="1"/></svg><span class="t" style="top:425px;font-size:12px;color:#808080;left:733px;">60</span><div style="left:625px;top:449px;width:13px;height:13px;background:#d4d0c8;box-shadow:inset -1px -1px #ffffff,inset 1px 1px #808080,inset -2px -2px #d4d0c8,inset 2px 2px #404040;"></div><span class="t" style="top:447px;font-size:12px;color:#fff;left:643px;margin:1px 0 0 1px;letter-spacing:0.064px;">Adjust Proportional With Bar Period</span><span class="t" style="top:447px;font-size:12px;color:#808080;left:643px;letter-spacing:0.064px;">Adjust Proportional With Bar Period</span><div style="left:602px;top:485px;width:262px;height:45px;box-sizing:border-box;border:1px solid #808080;box-shadow:inset 1px 1px #ffffff,1px 1px #ffffff"></div><div style="left:611px;top:478px;width:119px;height:14px;background:#d4d0c8"></div><svg style="left:612px;top:481px" width="12" height="12" shape-rendering="crispEdges"><path d="M4 0h4v1h-4zM2 1h2v1h-2zM8 1h2v1h-2zM1 2h1v2h-1zM0 4h1v4h-1zM1 8h1v2h-1z" fill="#808080"/><path d="M10 2h1v2h-1zM11 4h1v4h-1zM10 8h1v2h-1zM2 10h2v1h-2zM8 10h2v1h-2zM4 11h4v1h-4z" fill="#ffffff"/><path d="M4 1h4v1h-4zM2 2h2v1h-2zM8 2h2v1h-2zM2 3h1v1h-1zM1 4h1v4h-1zM2 8h1v1h-1z" fill="#404040"/><path d="M9 3h1v1h-1zM10 4h1v4h-1zM9 8h1v1h-1zM2 9h2v1h-2zM8 9h2v1h-2zM4 10h4v1h-4z" fill="#d4d0c8"/><path d="M4 2h4v1h1v1h1v4h-1v1h-1v1h-4v-1h-1v-1h-1v-4h1v-1h1z" fill="#fff"/><path d="M5 4h2v1h1v2h-1v1h-2v-1h-1v-2h1z" fill="#000"/></svg><span class="t" style="top:478px;font-size:12px;color:#000;left:629px;letter-spacing:0.163px;">Use Date Range</span><span class="t" style="top:500px;font-size:12px;color:#000;left:627px;letter-spacing:-0.069px;">From:</span><div style="left:662px;top:497px;width:81px;height:23px;background:#fff;box-shadow:inset -1px -1px #ffffff,inset 1px 1px #808080,inset -2px -2px #d4d0c8,inset 2px 2px #404040;"></div><span class="t" style="top:499px;font-size:12px;color:#000;left:665px;letter-spacing:0.161px;">2012-08-01</span><span class="t" style="top:500px;font-size:12px;color:#000;left:751px;letter-spacing:0.328px;">To:</span><div style="left:770px;top:497px;width:81px;height:23px;background:#fff;box-shadow:inset -1px -1px #ffffff,inset 1px 1px #808080,inset -2px -2px #d4d0c8,inset 2px 2px #404040;"></div><span class="t" style="top:499px;font-size:12px;color:#000;left:773px;letter-spacing:0.161px;">2012-10-31</span><span class="t" style="top:539px;font-size:12px;color:#000;right:1157px;letter-spacing:0.014px;">Price Display Format:</span><div style="left:770px;top:538px;width:95px;height:23px;background:#fff;box-shadow:inset -1px -1px #ffffff,inset 1px 1px #808080,inset -2px -2px #d4d0c8,inset 2px 2px #404040;"></div><div style="left:847px;top:540px;width:16px;height:19px;background:#d4d0c8;box-shadow:inset -1px -1px #404040,inset 1px 1px #d4d0c8,inset -2px -2px #808080,inset 2px 2px #ffffff;"></div><svg style="left:851px;top:547px" width="8" height="5" shape-rendering="crispEdges"><path d="M0 0h7v1h-1v1h-1v1h-1v1h-1v-1h-1v-1h-1v-1h-1z" fill="#000"/></svg><span class="t" style="top:540px;font-size:12px;color:#000;left:773px;letter-spacing:-0.229px;">.01</span><span class="t" style="top:566px;font-size:12px;color:#000;right:1157px;letter-spacing:-0.056px;">Tick Size:</span><div style="left:770px;top:564px;width:95px;height:23px;background:#fff;box-shadow:inset -1px -1px #ffffff,inset 1px 1px #808080,inset -2px -2px #d4d0c8,inset 2px 2px #404040;"></div><span class="t" style="top:566px;font-size:12px;color:#000;left:773px;letter-spacing:0.242px;">0.250000</span><span class="t" style="top:591px;font-size:12px;color:#000;right:1154px;letter-spacing:0.158px;">Volume at Price Multiplier:</span><div style="left:770px;top:591px;width:95px;height:23px;background:#fff;box-shadow:inset -1px -1px #ffffff,inset 1px 1px #808080,inset -2px -2px #d4d0c8,inset 2px 2px #404040;"></div><div style="left:847px;top:593px;width:16px;height:19px;background:#d4d0c8;box-shadow:inset -1px -1px #404040,inset 1px 1px #d4d0c8,inset -2px -2px #808080,inset 2px 2px #ffffff;"></div><svg style="left:851px;top:600px" width="8" height="5" shape-rendering="crispEdges"><path d="M0 0h7v1h-1v1h-1v1h-1v1h-1v-1h-1v-1h-1v-1h-1z" fill="#000"/></svg><svg style="left:775px;top:598px" width="3" height="9" shape-rendering="crispEdges" fill="#000"><rect x="2" y="0" width="1" height="9"/><rect x="1" y="0" width="1" height="2"/><rect x="0" y="1" width="1" height="1"/></svg><span class="t" style="top:616px;font-size:12px;color:#000;left:602px;letter-spacing:-0.051px;">Symbol:</span><div style="left:625px;top:634px;width:175px;height:23px;background:#fff;box-shadow:inset -1px -1px #ffffff,inset 1px 1px #808080,inset -2px -2px #d4d0c8,inset 2px 2px #404040;"></div><span class="t" style="top:636px;font-size:12px;color:#000;left:628px;letter-spacing:-0.002px;">ESH5-CME</span><div style="left:812px;top:634px;width:53px;height:23px;background:#d4d0c8;box-shadow:inset -1px -1px #404040,inset 1px 1px #ffffff,inset -2px -2px #808080,inset 2px 2px #d4d0c8;"></div><span class="t" style="top:636px;left:638px;width:400px;text-align:center;font-size:12px;color:#000;letter-spacing:-0.086px;">Find</span><span class="t" style="top:663px;font-size:12px;color:#000;left:602px;letter-spacing:0.054px;">Trade and Current Quote Symbol:</span><div style="left:625px;top:681px;width:175px;height:23px;background:#fff;box-shadow:inset -1px -1px #ffffff,inset 1px 1px #808080,inset -2px -2px #d4d0c8,inset 2px 2px #404040;"></div><div style="left:812px;top:681px;width:53px;height:23px;background:#d4d0c8;box-shadow:inset -1px -1px #404040,inset 1px 1px #ffffff,inset -2px -2px #808080,inset 2px 2px #d4d0c8;"></div><span class="t" style="top:683px;left:638px;width:400px;text-align:center;font-size:12px;color:#000;letter-spacing:-0.086px;">Find</span><div style="left:602px;top:715px;width:13px;height:13px;background:#fff;box-shadow:inset -1px -1px #ffffff,inset 1px 1px #808080,inset -2px -2px #d4d0c8,inset 2px 2px #404040;"></div><span class="t" style="top:712px;font-size:12px;color:#000;left:620px;letter-spacing:0.025px;">Automatically Rollover Futures Symbol</span><div style="left:879px;top:356px;width:242px;height:23px;background:#fff;box-shadow:inset -1px -1px #ffffff,inset 1px 1px #808080,inset -2px -2px #d4d0c8,inset 2px 2px #404040;"></div><div style="left:1103px;top:358px;width:16px;height:19px;background:#d4d0c8;box-shadow:inset -1px -1px #404040,inset 1px 1px #d4d0c8,inset -2px -2px #808080,inset 2px 2px #ffffff;"></div><svg style="left:1107px;top:365px" width="8" height="5" shape-rendering="crispEdges"><path d="M0 0h7v1h-1v1h-1v1h-1v1h-1v-1h-1v-1h-1v-1h-1z" fill="#000"/></svg><span class="t" style="top:359px;font-size:12px;color:#000;left:883px;letter-spacing:-0.075px;">Intraday Chart</span><div style="left:879px;top:384px;width:241px;height:125px;box-sizing:border-box;border:1px solid #808080;box-shadow:inset 1px 1px #ffffff,1px 1px #ffffff"></div><div style="left:886px;top:377px;width:134px;height:14px;background:#d4d0c8"></div><span class="t" style="top:376px;font-size:12px;color:#000;left:888px;letter-spacing:-0.016px;">Intraday Chart Bar Period:</span><span class="t" style="top:396px;font-size:12px;color:#000;left:893px;letter-spacing:0.030px;">Bar Period</span><div style="left:893px;top:416px;width:214px;height:23px;background:#fff;box-shadow:inset -1px -1px #ffffff,inset 1px 1px #808080,inset -2px -2px #d4d0c8,inset 2px 2px #404040;"></div><div style="left:1089px;top:418px;width:16px;height:19px;background:#d4d0c8;box-shadow:inset -1px -1px #404040,inset 1px 1px #d4d0c8,inset -2px -2px #808080,inset 2px 2px #ffffff;"></div><svg style="left:1093px;top:425px" width="8" height="5" shape-rendering="crispEdges"><path d="M0 0h7v1h-1v1h-1v1h-1v1h-1v-1h-1v-1h-1v-1h-1z" fill="#000"/></svg><span class="t" style="top:419px;font-size:12px;color:#000;left:897px;letter-spacing:0.074px;">Days-Mins-Secs Per Bar</span><div style="left:893px;top:442px;width:110px;height:23px;background:#fff;box-shadow:inset -1px -1px #ffffff,inset 1px 1px #808080,inset -2px -2px #d4d0c8,inset 2px 2px #404040;"></div><span class="t" style="top:444px;font-size:12px;color:#000;left:896px;letter-spacing:0.197px;">0-1-0</span><div style="left:893px;top:470px;width:13px;height:13px;background:#d4d0c8;box-shadow:inset -1px -1px #ffffff,inset 1px 1px #808080,inset -2px -2px #d4d0c8,inset 2px 2px #404040;"></div><span class="t" style="top:467px;font-size:12px;color:#fff;left:912px;margin:1px 0 0 1px;letter-spacing:0.039px;">Fill Session Gap</span><span class="t" style="top:467px;font-size:12px;color:#808080;left:912px;letter-spacing:0.039px;">Fill Session Gap</span><div style="left:893px;top:490px;width:13px;height:13px;background:#d4d0c8;box-shadow:inset -1px -1px #ffffff,inset 1px 1px #808080,inset -2px -2px #d4d0c8,inset 2px 2px #404040;"></div><span class="t" style="top:487px;font-size:12px;color:#fff;left:912px;margin:1px 0 0 1px;letter-spacing:0.028px;">New Bar When Exceeded</span><span class="t" style="top:487px;font-size:12px;color:#808080;left:912px;letter-spacing:0.028px;">New Bar When Exceeded</span><div style="left:879px;top:519px;width:241px;height:180px;box-sizing:border-box;border:1px solid #808080;box-shadow:inset 1px 1px #ffffff,1px 1px #ffffff"></div><div style="left:886px;top:512px;width:156px;height:14px;background:#d4d0c8"></div><span class="t" style="top:511px;font-size:12px;color:#000;left:888px;letter-spacing:-0.068px;">Session Times (HH:MM:SS):</span><span class="t" style="top:531px;font-size:12px;color:#000;left:895px;letter-spacing:-0.001px;">Start Time:</span><div style="left:993px;top:531px;width:117px;height:23px;background:#fff;box-shadow:inset -1px -1px #ffffff,inset 1px 1px #808080,inset -2px -2px #d4d0c8,inset 2px 2px #404040;"></div><div style="left:1092px;top:534px;width:16px;height:9px;background:#d4d0c8;box-shadow:inset -1px -1px #404040,inset 1px 1px #ffffff,inset -2px -2px #808080,inset 2px 2px #d4d0c8;"></div><div style="left:1092px;top:543px;width:16px;height:9px;background:#d4d0c8;box-shadow:inset -1px -1px #404040,inset 1px 1px #ffffff,inset -2px -2px #808080,inset 2px 2px #d4d0c8;"></div><svg style="left:1098px;top:537px" width="3" height="2" shape-rendering="crispEdges" fill="#000"><rect x="1" y="0" width="1" height="1"/><rect x="0" y="1" width="3" height="1"/></svg><svg style="left:1098px;top:547px" width="3" height="2" shape-rendering="crispEdges" fill="#000"><rect x="0" y="0" width="3" height="1"/><rect x="1" y="1" width="1" height="1"/></svg><span class="t" style="top:534px;font-size:12px;color:#000;left:997px;letter-spacing:0.035px;">09:30:00</span><span class="t" style="top:558px;font-size:12px;color:#000;left:895px;letter-spacing:0.219px;">End Time:</span><div style="left:993px;top:557px;width:117px;height:23px;background:#fff;box-shadow:inset -1px -1px #ffffff,inset 1px 1px #808080,inset -2px -2px #d4d0c8,inset 2px 2px #404040;"></div><div style="left:1092px;top:560px;width:16px;height:9px;background:#d4d0c8;box-shadow:inset -1px -1px #404040,inset 1px 1px #ffffff,inset -2px -2px #808080,inset 2px 2px #d4d0c8;"></div><div style="left:1092px;top:569px;width:16px;height:9px;background:#d4d0c8;box-shadow:inset -1px -1px #404040,inset 1px 1px #ffffff,inset -2px -2px #808080,inset 2px 2px #d4d0c8;"></div><svg style="left:1098px;top:563px" width="3" height="2" shape-rendering="crispEdges" fill="#000"><rect x="1" y="0" width="1" height="1"/><rect x="0" y="1" width="3" height="1"/></svg><svg style="left:1098px;top:573px" width="3" height="2" shape-rendering="crispEdges" fill="#000"><rect x="0" y="0" width="3" height="1"/><rect x="1" y="1" width="1" height="1"/></svg><span class="t" style="top:560px;font-size:12px;color:#000;left:997px;letter-spacing:-0.090px;">16:14:59</span><span class="t" style="top:605px;font-size:12px;color:#000;left:895px;letter-spacing:-0.098px;">Evening Start:</span><div style="left:993px;top:602px;width:117px;height:23px;background:#fff;box-shadow:inset -1px -1px #ffffff,inset 1px 1px #808080,inset -2px -2px #d4d0c8,inset 2px 2px #404040;"></div><div style="left:1092px;top:605px;width:16px;height:9px;background:#d4d0c8;box-shadow:inset -1px -1px #404040,inset 1px 1px #ffffff,inset -2px -2px #808080,inset 2px 2px #d4d0c8;"></div><div style="left:1092px;top:614px;width:16px;height:9px;background:#d4d0c8;box-shadow:inset -1px -1px #404040,inset 1px 1px #ffffff,inset -2px -2px #808080,inset 2px 2px #d4d0c8;"></div><svg style="left:1098px;top:608px" width="3" height="2" shape-rendering="crispEdges" fill="#000"><rect x="1" y="0" width="1" height="1"/><rect x="0" y="1" width="3" height="1"/></svg><svg style="left:1098px;top:618px" width="3" height="2" shape-rendering="crispEdges" fill="#000"><rect x="0" y="0" width="3" height="1"/><rect x="1" y="1" width="1" height="1"/></svg><span class="t" style="top:605px;font-size:12px;color:#000;left:997px;letter-spacing:-0.090px;">16:30:00</span><span class="t" style="top:631px;font-size:12px;color:#000;left:895px;letter-spacing:-0.033px;">Evening End:</span><div style="left:993px;top:628px;width:117px;height:23px;background:#fff;box-shadow:inset -1px -1px #ffffff,inset 1px 1px #808080,inset -2px -2px #d4d0c8,inset 2px 2px #404040;"></div><div style="left:1092px;top:631px;width:16px;height:9px;background:#d4d0c8;box-shadow:inset -1px -1px #404040,inset 1px 1px #ffffff,inset -2px -2px #808080,inset 2px 2px #d4d0c8;"></div><div style="left:1092px;top:640px;width:16px;height:9px;background:#d4d0c8;box-shadow:inset -1px -1px #404040,inset 1px 1px #ffffff,inset -2px -2px #808080,inset 2px 2px #d4d0c8;"></div><svg style="left:1098px;top:634px" width="3" height="2" shape-rendering="crispEdges" fill="#000"><rect x="1" y="0" width="1" height="1"/><rect x="0" y="1" width="3" height="1"/></svg><svg style="left:1098px;top:644px" width="3" height="2" shape-rendering="crispEdges" fill="#000"><rect x="0" y="0" width="3" height="1"/><rect x="1" y="1" width="1" height="1"/></svg><span class="t" style="top:631px;font-size:12px;color:#000;left:997px;letter-spacing:0.035px;">09:29:59</span><div style="left:895px;top:584px;width:13px;height:13px;background:#fff;box-shadow:inset -1px -1px #ffffff,inset 1px 1px #808080,inset -2px -2px #d4d0c8,inset 2px 2px #404040;"></div><svg style="left:898px;top:587px" width="7" height="7" shape-rendering="crispEdges"><path d="M6 0h1v3h-1v1h-1v1h-1v1h-1v1h-1v-1h-1v-1h-1v-1h-1v-3h1v1h1v1h1v1h1v-1h1v-1h1z" fill="#000"/></svg><span class="t" style="top:582px;font-size:12px;color:#000;left:913px;letter-spacing:0.049px;">Use Evening Session</span><div style="left:895px;top:657px;width:13px;height:13px;background:#fff;box-shadow:inset -1px -1px #ffffff,inset 1px 1px #808080,inset -2px -2px #d4d0c8,inset 2px 2px #404040;"></div><span class="t" style="top:655px;font-size:12px;color:#000;left:913px;letter-spacing:0.011px;">New Bar At Session Start</span><div style="left:895px;top:678px;width:13px;height:13px;background:#fff;box-shadow:inset -1px -1px #ffffff,inset 1px 1px #808080,inset -2px -2px #d4d0c8,inset 2px 2px #404040;"></div><svg style="left:898px;top:681px" width="7" height="7" shape-rendering="crispEdges"><path d="M6 0h1v3h-1v1h-1v1h-1v1h-1v1h-1v-1h-1v-1h-1v-1h-1v-3h1v1h1v1h1v1h1v-1h1v-1h1z" fill="#000"/></svg><span class="t" style="top:676px;font-size:12px;color:#000;left:913px;letter-spacing:0.106px;">Load Weekend Data</span><div style="left:907px;top:715px;width:13px;height:13px;background:#fff;box-shadow:inset -1px -1px #ffffff,inset 1px 1px #808080,inset -2px -2px #d4d0c8,inset 2px 2px #404040;"></div><span class="t" style="top:712px;font-size:12px;color:#000;left:925px;letter-spacing:0.010px;">Save Days to Load, Intraday Bar Period, Graph Draw Type as Default</span><div style="left:1129px;top:356px;width:192px;height:116px;box-sizing:border-box;border:1px solid #808080;box-shadow:inset 1px 1px #ffffff,1px 1px #ffffff"></div><div style="left:1136px;top:349px;width:138px;height:14px;background:#d4d0c8"></div><span class="t" style="top:348px;font-size:12px;color:#000;left:1138px;letter-spacing:0.022px;">Historical Chart Bar Period:</span><svg style="left:1148px;top:372px" width="12" height="12" shape-rendering="crispEdges"><path d="M4 0h4v1h-4zM2 1h2v1h-2zM8 1h2v1h-2zM1 2h1v2h-1zM0 4h1v4h-1zM1 8h1v2h-1z" fill="#808080"/><path d="M10 2h1v2h-1zM11 4h1v4h-1zM10 8h1v2h-1zM2 10h2v1h-2zM8 10h2v1h-2zM4 11h4v1h-4z" fill="#ffffff"/><path d="M4 1h4v1h-4zM2 2h2v1h-2zM8 2h2v1h-2zM2 3h1v1h-1zM1 4h1v4h-1zM2 8h1v1h-1z" fill="#404040"/><path d="M9 3h1v1h-1zM10 4h1v4h-1zM9 8h1v1h-1zM2 9h2v1h-2zM8 9h2v1h-2zM4 10h4v1h-4z" fill="#d4d0c8"/><path d="M4 2h4v1h1v1h1v4h-1v1h-1v1h-4v-1h-1v-1h-1v-4h1v-1h1z" fill="#d4d0c8"/><path d="M5 4h2v1h1v2h-1v1h-2v-1h-1v-2h1z" fill="#808080"/></svg><span class="t" style="top:369px;font-size:12px;color:#fff;left:1166px;margin:1px 0 0 1px;letter-spacing:-0.338px;">Days:</span><span class="t" style="top:369px;font-size:12px;color:#808080;left:1166px;letter-spacing:-0.338px;">Days:</span><svg style="left:1148px;top:391px" width="12" height="12" shape-rendering="crispEdges"><path d="M4 0h4v1h-4zM2 1h2v1h-2zM8 1h2v1h-2zM1 2h1v2h-1zM0 4h1v4h-1zM1 8h1v2h-1z" fill="#808080"/><path d="M10 2h1v2h-1zM11 4h1v4h-1zM10 8h1v2h-1zM2 10h2v1h-2zM8 10h2v1h-2zM4 11h4v1h-4z" fill="#ffffff"/><path d="M4 1h4v1h-4zM2 2h2v1h-2zM8 2h2v1h-2zM2 3h1v1h-1zM1 4h1v4h-1zM2 8h1v1h-1z" fill="#404040"/><path d="M9 3h1v1h-1zM10 4h1v4h-1zM9 8h1v1h-1zM2 9h2v1h-2zM8 9h2v1h-2zM4 10h4v1h-4z" fill="#d4d0c8"/><path d="M4 2h4v1h1v1h1v4h-1v1h-1v1h-4v-1h-1v-1h-1v-4h1v-1h1z" fill="#d4d0c8"/></svg><span class="t" style="top:388px;font-size:12px;color:#fff;left:1166px;margin:1px 0 0 1px;letter-spacing:-0.021px;">Weekly</span><span class="t" style="top:388px;font-size:12px;color:#808080;left:1166px;letter-spacing:-0.021px;">Weekly</span><svg style="left:1148px;top:410px" width="12" height="12" shape-rendering="crispEdges"><path d="M4 0h4v1h-4zM2 1h2v1h-2zM8 1h2v1h-2zM1 2h1v2h-1zM0 4h1v4h-1zM1 8h1v2h-1z" fill="#808080"/><path d="M10 2h1v2h-1zM11 4h1v4h-1zM10 8h1v2h-1zM2 10h2v1h-2zM8 10h2v1h-2zM4 11h4v1h-4z" fill="#ffffff"/><path d="M4 1h4v1h-4zM2 2h2v1h-2zM8 2h2v1h-2zM2 3h1v1h-1zM1 4h1v4h-1zM2 8h1v1h-1z" fill="#404040"/><path d="M9 3h1v1h-1zM10 4h1v4h-1zM9 8h1v1h-1zM2 9h2v1h-2zM8 9h2v1h-2zM4 10h4v1h-4z" fill="#d4d0c8"/><path d="M4 2h4v1h1v1h1v4h-1v1h-1v1h-4v-1h-1v-1h-1v-4h1v-1h1z" fill="#d4d0c8"/></svg><span class="t" style="top:407px;font-size:12px;color:#fff;left:1166px;margin:1px 0 0 1px;letter-spacing:0.138px;">Monthly</span><span class="t" style="top:407px;font-size:12px;color:#808080;left:1166px;letter-spacing:0.138px;">Monthly</span><svg style="left:1148px;top:429px" width="12" height="12" shape-rendering="crispEdges"><path d="M4 0h4v1h-4zM2 1h2v1h-2zM8 1h2v1h-2zM1 2h1v2h-1zM0 4h1v4h-1zM1 8h1v2h-1z" fill="#808080"/><path d="M10 2h1v2h-1zM11 4h1v4h-1zM10 8h1v2h-1zM2 10h2v1h-2zM8 10h2v1h-2zM4 11h4v1h-4z" fill="#ffffff"/><path d="M4 1h4v1h-4zM2 2h2v1h-2zM8 2h2v1h-2zM2 3h1v1h-1zM1 4h1v4h-1zM2 8h1v1h-1z" fill="#404040"/><path d="M9 3h1v1h-1zM10 4h1v4h-1zM9 8h1v1h-1zM2 9h2v1h-2zM8 9h2v1h-2zM4 10h4v1h-4z" fill="#d4d0c8"/><path d="M4 2h4v1h1v1h1v4h-1v1h-1v1h-4v-1h-1v-1h-1v-4h1v-1h1z" fill="#d4d0c8"/></svg><span class="t" style="top:426px;font-size:12px;color:#fff;left:1166px;margin:1px 0 0 1px;letter-spacing:-0.040px;">Quarterly</span><span class="t" style="top:426px;font-size:12px;color:#808080;left:1166px;letter-spacing:-0.040px;">Quarterly</span><svg style="left:1148px;top:448px" width="12" height="12" shape-rendering="crispEdges"><path d="M4 0h4v1h-4zM2 1h2v1h-2zM8 1h2v1h-2zM1 2h1v2h-1zM0 4h1v4h-1zM1 8h1v2h-1z" fill="#808080"/><path d="M10 2h1v2h-1zM11 4h1v4h-1zM10 8h1v2h-1zM2 10h2v1h-2zM8 10h2v1h-2zM4 11h4v1h-4z" fill="#ffffff"/><path d="M4 1h4v1h-4zM2 2h2v1h-2zM8 2h2v1h-2zM2 3h1v1h-1zM1 4h1v4h-1zM2 8h1v1h-1z" fill="#404040"/><path d="M9 3h1v1h-1zM10 4h1v4h-1zM9 8h1v1h-1zM2 9h2v1h-2zM8 9h2v1h-2zM4 10h4v1h-4z" fill="#d4d0c8"/><path d="M4 2h4v1h1v1h1v4h-1v1h-1v1h-4v-1h-1v-1h-1v-4h1v-1h1z" fill="#d4d0c8"/></svg><span class="t" style="top:445px;font-size:12px;color:#fff;left:1166px;margin:1px 0 0 1px;letter-spacing:0.013px;">Yearly</span><span class="t" style="top:445px;font-size:12px;color:#808080;left:1166px;letter-spacing:0.013px;">Yearly</span><div style="left:1220px;top:369px;width:84px;height:23px;background:#d4d0c8;box-shadow:inset -1px -1px #ffffff,inset 1px 1px #808080,inset -2px -2px #d4d0c8,inset 2px 2px #404040;"></div><svg style="left:1225px;top:376px" width="3" height="9" shape-rendering="crispEdges" fill="#808080"><rect x="2" y="0" width="1" height="9"/><rect x="1" y="0" width="1" height="2"/><rect x="0" y="1" width="1" height="1"/></svg><span class="t" style="top:481px;font-size:12px;color:#000;left:1129px;letter-spacing:-0.010px;">Graph Draw Type:</span><div style="left:1129px;top:501px;width:193px;height:96px;background:#fff;box-shadow:inset -1px -1px #ffffff,inset 1px 1px #808080,inset -2px -2px #d4d0c8,inset 2px 2px #404040;"></div><span class="t" style="top:502px;font-size:12px;color:#000;left:1133px;letter-spacing:-0.151px;">OHLC Bars</span><div style="left:1131px;top:518px;width:173px;height:15px;background:#0a246a"></div><span class="t" style="top:517px;font-size:12px;color:#fff;left:1133px;letter-spacing:-0.003px;">Candlestick Bars</span><span class="t" style="top:532px;font-size:12px;color:#000;left:1133px;letter-spacing:-0.035px;">Candlestick Body Only</span><span class="t" style="top:547px;font-size:12px;color:#000;left:1133px;letter-spacing:0.070px;">Candlestick Bars Hollow</span><span class="t" style="top:562px;font-size:12px;color:#000;left:1133px;letter-spacing:0.047px;">Line on Close</span><span class="t" style="top:577px;font-size:12px;color:#000;left:1133px;letter-spacing:0.203px;">Mountain</span><div style="left:1304px;top:503px;width:16px;height:92px;background:repeating-conic-gradient(#fff 0 25%,#d4d0c8 0 50%) 0 0/2px 2px"></div><div style="left:1304px;top:503px;width:16px;height:16px;background:#d4d0c8;box-shadow:inset -1px -1px #404040,inset 1px 1px #d4d0c8,inset -2px -2px #808080,inset 2px 2px #ffffff;"></div><svg style="left:1308px;top:509px" width="7" height="4" shape-rendering="crispEdges"><path d="M3 0h1v1h1v1h1v1h1v1h-7v-1h1v-1h1v-1h1z" fill="#000"/></svg><div style="left:1304px;top:519px;width:16px;height:21px;background:#d4d0c8;box-shadow:inset -1px -1px #404040,inset 1px 1px #d4d0c8,inset -2px -2px #808080,inset 2px 2px #ffffff;"></div><div style="left:1304px;top:579px;width:16px;height:16px;background:#d4d0c8;box-shadow:inset -1px -1px #404040,inset 1px 1px #d4d0c8,inset -2px -2px #808080,inset 2px 2px #ffffff;"></div><svg style="left:1308px;top:585px" width="7" height="4" shape-rendering="crispEdges"><path d="M0 0h7v1h-1v1h-1v1h-1v1h-1v-1h-1v-1h-1v-1h-1z" fill="#000"/></svg><div style="left:1129px;top:604px;width:82px;height:26px;background:#d4d0c8;box-shadow:inset -1px -1px #404040,inset 1px 1px #ffffff,inset -2px -2px #808080,inset 2px 2px #d4d0c8;"></div><span class="t" style="top:608px;left:970px;width:400px;text-align:center;font-size:12px;color:#000;letter-spacing:-0.006px;">Scale</span><div style="left:1131px;top:641px;width:182px;height:26px;background:#d4d0c8;box-shadow:inset -1px -1px #404040,inset 1px 1px #ffffff,inset -2px -2px #808080,inset 2px 2px #d4d0c8;"></div><span class="t" style="top:645px;left:1022px;width:400px;text-align:center;font-size:12px;color:#000;letter-spacing:0.032px;">Apply Global Symbol Settings</span><div style="left:1131px;top:673px;width:182px;height:26px;background:#d4d0c8;box-shadow:inset -1px -1px #404040,inset 1px 1px #ffffff,inset -2px -2px #808080,inset 2px 2px #d4d0c8;"></div><span class="t" style="top:677px;left:1022px;width:400px;text-align:center;font-size:12px;color:#000;letter-spacing:0.046px;">Edit Global Symbol Settings</span></body></html>
